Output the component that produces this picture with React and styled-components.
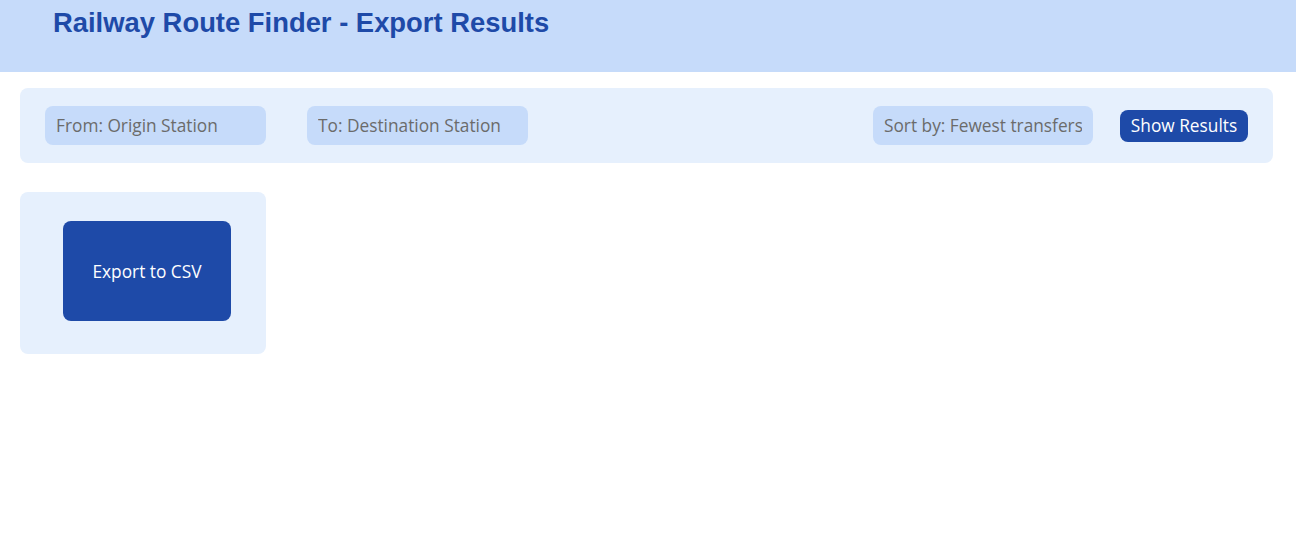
import React from "react";
import styled, { createGlobalStyle } from "styled-components";

const GlobalStyle = createGlobalStyle`
  body {
    margin: 0;
    background: #ffffff;
    font-family: "Open Sans", "Liberation Sans", sans-serif;
  }
  * {
    box-sizing: border-box;
  }
`;

const Header = styled.header`
  height: 72px;
  padding: 7px 53px 0;
  background-color: #c6dbfa;
`;

const Title = styled.h1`
  margin: 0;
  font-family: "Liberation Sans", Arial, sans-serif;
  font-size: 27.4px;
  font-weight: 700;
  color: #1e4aa8;
`;

const Main = styled.main`
  padding: 16px 23px 16px 20px;
  display: flex;
  flex-direction: column;
  align-items: flex-start;
  gap: 29px;
`;

const Toolbar = styled.div`
  width: 100%;
  display: flex;
  align-items: center;
  padding: 18px 25px;
  background-color: #e6f0fd;
  border-radius: 8px;
`;

const Field = styled.input`
  width: ${(p) => p.$w || 221}px;
  height: 39px;
  padding: 0 11px;
  border: none;
  border-radius: 8px;
  background-color: #c6dbfa;
  font-family: "Open Sans", sans-serif;
  font-size: 17.3px;
  color: #6b6b6b;
  outline: none;
  margin-right: ${(p) => p.$gap || 0}px;
  &::placeholder {
    color: #6b6b6b;
  }
`;

const Spacer = styled.div`
  flex: 1;
`;

const Button = styled.button`
  border: none;
  border-radius: 8px;
  background-color: #1e4aa8;
  color: #ffffff;
  font-family: "Open Sans", sans-serif;
  font-size: 17.3px;
  cursor: pointer;
  width: ${(p) => p.$w}px;
  height: ${(p) => p.$h}px;
  padding: 0;
`;

const Card = styled.div`
  width: 246px;
  padding: 29px 35px 33px 43px;
  background-color: #e6f0fd;
  border-radius: 8px;
`;

export default function App() {
  return (
    <>
      <GlobalStyle />
      <Header>
        <Title>Railway Route Finder - Export Results</Title>
      </Header>
      <Main>
        <Toolbar>
          <Field placeholder="From: Origin Station" $gap={41} />
          <Field placeholder="To: Destination Station" />
          <Spacer />
          <Field placeholder="Sort by: Fewest transfers" $w={220} $gap={27} />
          <Button $w={128} $h={32}>Show Results</Button>
        </Toolbar>
        <Card>
          <Button $w={168} $h={100}>Export to CSV</Button>
        </Card>
      </Main>
    </>
  );
}
